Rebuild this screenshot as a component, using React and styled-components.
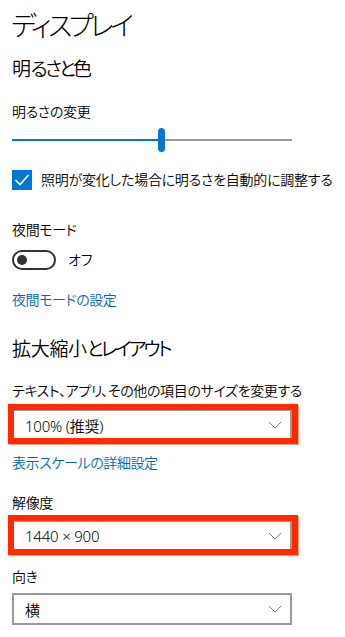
import React from "react";
import styled, { createGlobalStyle } from "styled-components";

const Global = createGlobalStyle`
  html, body { margin: 0; padding: 0; background: #fff; }
  body {
    font-family: "Noto Sans", "Noto Sans CJK JP", sans-serif;
    color: #000;
    font-feature-settings: "palt";
  }
`;

const Page = styled.div`
  width: 345px;
  padding: 11px 0 0 12px;
  box-sizing: border-box;
  display: flex;
  flex-direction: column;
  align-items: flex-start;
`;

const Title = styled.h1`
  margin: 0 0 0 -1px;
  font-size: 27px;
  font-weight: 300;
  line-height: 30px;
  letter-spacing: -3.6px;
  white-space: nowrap;
`;

const SectionTitle = styled.h2`
  margin: ${(p) => p.$mt}px 0 0;
  font-size: 19px;
  font-weight: 350;
  line-height: 28px;
  letter-spacing: -0.3px;
  white-space: nowrap;
`;

const Kana = styled.span`
  letter-spacing: -2.8px;
`;

const Label = styled.div`
  margin-top: ${(p) => p.$mt}px;
  font-size: 14px;
  font-weight: 350;
  line-height: 20px;
  letter-spacing: -0.35px;
  white-space: nowrap;
`;

const Link = styled.a`
  margin-top: ${(p) => p.$mt}px;
  font-size: 14px;
  font-weight: 350;
  line-height: 20px;
  letter-spacing: -0.4px;
  color: #0067b8;
  text-decoration: none;
`;

const Slider = styled.div`
  margin-top: 6px;
  width: 280px;
  height: 24px;
  display: flex;
  align-items: center;
`;

const TrackFill = styled.div`
  height: 2px;
  background: #0078d7;
`;

const TrackRest = styled.div`
  flex: 1;
  height: 2px;
  background: #999;
`;

const Thumb = styled.div`
  width: 7px;
  height: 24px;
  border-radius: 4px;
  background: #0078d7;
`;

const CheckRow = styled.label`
  margin-top: 18px;
  display: flex;
  align-items: center;
  gap: 9px;
  font-size: 14px;
  font-weight: 350;
  line-height: 20px;
  letter-spacing: -0.25px;
  white-space: nowrap;
`;

const CheckBox = styled.span`
  width: 20px;
  height: 20px;
  background: #0078d7;
  display: flex;
  align-items: center;
  justify-content: center;
`;

const ToggleRow = styled.div`
  margin-top: 10px;
  display: flex;
  align-items: center;
  gap: 12px;
  font-size: 14px;
  font-weight: 350;
  line-height: 20px;
`;

const Toggle = styled.div`
  width: 44px;
  height: 20px;
  box-sizing: border-box;
  border: 2px solid #333;
  border-radius: 10px;
  display: flex;
  align-items: center;
  padding-left: 3px;
`;

const Knob = styled.span`
  width: 10px;
  height: 10px;
  border-radius: 50%;
  background: #333;
`;

const SelectWrap = styled.div`
  position: relative;
  margin-top: ${(p) => p.$mt}px;
`;

const Select = styled.div`
  width: 280px;
  height: 32px;
  box-sizing: border-box;
  border: 2px solid #999;
  background: #fff;
  display: flex;
  align-items: center;
  justify-content: space-between;
  padding: 0 8px 0 11px;
  font-size: 15px;
  font-weight: 350;
  letter-spacing: -0.2px;
`;

const Highlight = styled.div`
  position: absolute;
  top: -5px;
  left: -4px;
  right: -6px;
  bottom: -3px;
  border: 6px solid #ff2a00;
  box-shadow: 0 0 1px 0.5px rgba(255, 60, 30, 0.5);
  pointer-events: none;
`;

const Chevron = () => (
  <svg width="14" height="8" viewBox="0 0 14 8">
    <path d="M1 1 L7 7 L13 1" fill="none" stroke="#777" strokeWidth="1" />
  </svg>
);

const Dropdown = ({ mt, value, highlight }) => (
  <SelectWrap $mt={mt}>
    <Select>
      <span>{value}</span>
      <Chevron />
    </Select>
    {highlight && <Highlight />}
  </SelectWrap>
);

export default function App() {
  const brightness = 52;
  return (
    <>
      <Global />
      <Page>
        <Title>ディスプレイ</Title>
        <SectionTitle $mt={14}>
          明<Kana>るさと</Kana>色
        </SectionTitle>
        <Label $mt={19}>明るさの変更</Label>
        <Slider>
          <TrackFill style={{ width: `${brightness}%` }} />
          <Thumb />
          <TrackRest />
        </Slider>
        <CheckRow>
          <CheckBox>
            <svg width="16" height="14" viewBox="0 0 16 14">
              <path d="M1.5 7 L6 11.5 L14.5 2" fill="none" stroke="#fff" strokeWidth="1.6" />
            </svg>
          </CheckBox>
          照明が変化した場合に明るさを自動的に調整する
        </CheckRow>
        <Label $mt={30}>夜間モード</Label>
        <ToggleRow>
          <Toggle>
            <Knob />
          </Toggle>
          オフ
        </ToggleRow>
        <Link $mt={20}>夜間モードの設定</Link>
        <SectionTitle $mt={25}>
          拡大縮小<Kana>とレイアウト</Kana>
        </SectionTitle>
        <Label $mt={18}>テキスト、アプリ、その他の項目のサイズを変更する</Label>
        <Dropdown mt={8} value="100% (推奨)" highlight />
        <Link $mt={12}>表示スケールの詳細設定</Link>
        <Label $mt={20}>解像度</Label>
        <Dropdown mt={7} value="1440 × 900" highlight />
        <Label $mt={15}>向き</Label>
        <Dropdown mt={6} value="横" />
      </Page>
    </>
  );
}
